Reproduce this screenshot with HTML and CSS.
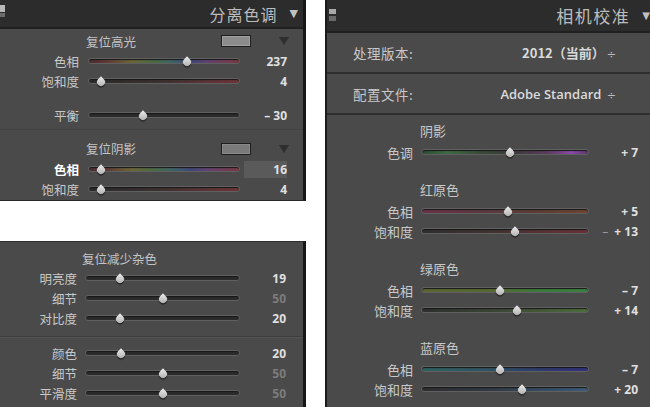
FILE: index.html
```html
<!DOCTYPE html>
<html lang="zh">
<head>
<meta charset="utf-8">
<link rel="stylesheet" href="styles.css">
</head>
<body>
<div class="page">
  <div class="left-col">
    <section class="panel split">
      <header class="phead">
        <span class="grip grip-left"></span>
        <h2>分离色调</h2>
        <span class="tri">▼</span>
      </header>
      <div class="pbody">
        <div class="reset-row"><span class="reset">复位高光</span><span class="swatch"></span><span class="mini-tri"></span></div>
        <div class="srow"><label>色相</label><div class="track hue"><i class="thumb" style="left:65%"></i></div><span class="val">237</span></div>
        <div class="srow"><label>饱和度</label><div class="track sat-red"><i class="thumb" style="left:8%"></i></div><span class="val">4</span></div>
        <div class="srow balance"><label>平衡</label><div class="track"><i class="thumb" style="left:36%"></i></div><span class="val">– 30</span></div>
        <div class="reset-row shadow"><span class="reset">复位阴影</span><span class="swatch dark"></span><span class="mini-tri"></span></div>
        <div class="srow active"><label>色相</label><div class="track hue"><i class="thumb" style="left:8%"></i></div><span class="val boxed">16</span></div>
        <div class="srow"><label>饱和度</label><div class="track sat-red"><i class="thumb" style="left:8%"></i></div><span class="val">4</span></div>
      </div>
    </section>
    <section class="panel noise">
      <div class="nbody">
        <div class="reset-row"><span class="reset">复位减少杂色</span></div>
        <div class="srow"><label>明亮度</label><div class="track"><i class="thumb" style="left:22%"></i></div><span class="val">19</span></div>
        <div class="srow"><label>细节</label><div class="track"><i class="thumb" style="left:50%"></i></div><span class="val dim">50</span></div>
        <div class="srow"><label>对比度</label><div class="track"><i class="thumb" style="left:22%"></i></div><span class="val">20</span></div>
        <div class="divider"></div>
        <div class="srow"><label>颜色</label><div class="track"><i class="thumb" style="left:23%"></i></div><span class="val">20</span></div>
        <div class="srow"><label>细节</label><div class="track"><i class="thumb" style="left:50%"></i></div><span class="val dim">50</span></div>
        <div class="srow"><label>平滑度</label><div class="track"><i class="thumb" style="left:50%"></i></div><span class="val dim">50</span></div>
      </div>
    </section>
  </div>

  <section class="panel calib">
    <header class="phead big">
      <span class="grip"></span>
      <h2>相机校准</h2>
      <span class="tri">▼</span>
    </header>
    <div class="prow"><span class="plabel">处理版本:</span><span class="pval">2012（当前）<span class="updown">÷</span></span></div>
    <div class="prow"><span class="plabel">配置文件:</span><span class="pval latin">Adobe Standard <span class="updown">÷</span></span></div>
    <div class="cbody">
      <div class="group">
        <div class="gtitle">阴影</div>
        <div class="srow"><label>色调</label><div class="track tint"><i class="thumb" style="left:53%"></i></div><span class="val">+ 7</span></div>
      </div>
      <div class="group">
        <div class="gtitle">红原色</div>
        <div class="srow"><label>色相</label><div class="track red-hue"><i class="thumb" style="left:52%"></i></div><span class="val">+ 5</span></div>
        <div class="srow"><label>饱和度</label><div class="track red-sat"><i class="thumb" style="left:56%"></i></div><span class="val"><span class="stray">–</span>+ 13</span></div>
      </div>
      <div class="group">
        <div class="gtitle">绿原色</div>
        <div class="srow"><label>色相</label><div class="track green-hue"><i class="thumb" style="left:47%"></i></div><span class="val">– 7</span></div>
        <div class="srow"><label>饱和度</label><div class="track green-sat"><i class="thumb" style="left:57%"></i></div><span class="val">+ 14</span></div>
      </div>
      <div class="group">
        <div class="gtitle">蓝原色</div>
        <div class="srow"><label>色相</label><div class="track blue-hue"><i class="thumb" style="left:47%"></i></div><span class="val">– 7</span></div>
        <div class="srow"><label>饱和度</label><div class="track blue-sat"><i class="thumb" style="left:60%"></i></div><span class="val">+ 20</span></div>
      </div>
    </div>
  </section>
</div>
</body>
</html>
```

FILE: styles.css
```css
* { box-sizing: border-box; }

html, body {
  margin: 0;
  padding: 0;
  background: #ffffff;
}

body {
  width: 650px;
  height: 407px;
  overflow: hidden;
  font-family: "Noto Sans CJK SC", "Noto Sans", sans-serif;
}

.page {
  display: flex;
  height: 407px;
}

.left-col {
  width: 306px;
  display: flex;
  flex-direction: column;
  justify-content: space-between;
}

.panel {
  background: #4a4a4a;
  color: #c8c8c8;
}

.split {
  height: 201px;
  border-right: 3px solid #161616;
  border-bottom: 1px solid #2a2a2a;
}

.noise {
  height: 166px;
  border-right: 3px solid #161616;
  border-top: 1px solid #2e2e2e;
}

.calib {
  margin-left: 19px;
  flex: 1;
  border-left: 2px solid #1c1c1c;
}

/* header */
.phead {
  height: 29px;
  background: #2c2c2c;
  border-bottom: 2px solid #202020;
  display: flex;
  align-items: center;
}

.phead.big {
  height: 33px;
}

.phead h2 {
  margin: 0 0 0 auto;
  font-size: 16px;
  font-weight: normal;
  letter-spacing: 1px;
  color: #bcbcbc;
}

.phead.big h2 {
  font-size: 17px;
  letter-spacing: 1.5px;
}

.tri {
  font-size: 11px;
  color: #c0c0c0;
  margin: 0 5px 0 12px;
  font-family: "DejaVu Sans", sans-serif;
}

.phead.big .tri {
  margin: 0 0 0 12px;
  font-size: 10px;
}

.grip {
  width: 7px;
  height: 13px;
  margin-left: 2px;
  background:
    linear-gradient(#a8a8a8, #a8a8a8) 0 0 / 7px 5px no-repeat,
    linear-gradient(#6a6a6a, #6a6a6a) 0 7px / 7px 5px no-repeat;
}

.grip-left {
  width: 5px;
  margin-left: 0;
  align-self: flex-start;
  margin-top: 5px;
  background:
    linear-gradient(#b8b8b8, #b8b8b8) 0 0 / 5px 7px no-repeat,
    linear-gradient(#6a6a6a, #6a6a6a) 0 8px / 5px 4px no-repeat;
}

/* body rows */
.pbody {
  padding-top: 2px;
}

.reset-row {
  height: 20px;
  display: flex;
  align-items: center;
  padding-left: 86px;
}

.reset {
  font-size: 12.5px;
  color: #c4c4c4;
  width: 135px;
}

.swatch {
  width: 30px;
  height: 12px;
  background: #8c8c8c;
  border: 1px solid #1e1e1e;
  box-shadow: inset 0 0 0 1px #a0a0a0;
}

.swatch.dark {
  background: #7a7a7a;
  box-shadow: inset 0 0 0 1px #8a8a8a;
}

.mini-tri {
  width: 0;
  height: 0;
  margin-left: 28px;
  border-left: 5px solid transparent;
  border-right: 5px solid transparent;
  border-top: 8px solid #2e2e2e;
}

.srow {
  height: 20px;
  display: flex;
  align-items: center;
}

.srow label {
  width: 79px;
  text-align: right;
  font-size: 12.5px;
  color: #c8c8c8;
}

.track {
  position: relative;
  margin-left: 9px;
  width: 152px;
  height: 6px;
  border-radius: 3px;
  background: #2b2b2b;
  border: 1px solid #606060;
  box-shadow: inset 0 1px 1px #181818;
}

.thumb {
  position: absolute;
  top: 50%;
  width: 8px;
  height: 8px;
  margin-left: -4px;
  margin-top: -3.5px;
  background: linear-gradient(135deg, #eeeeee, #a9a9a9);
  border-radius: 0 50% 50% 50%;
  transform: rotate(45deg);
  box-shadow: 1px 1px 1px rgba(0,0,0,0.5);
}

.val {
  width: 47px;
  text-align: right;
  font-family: "Open Sans", "Noto Sans", sans-serif;
  font-weight: 700;
  font-size: 12px;
  color: #e0e0e0;
}

.val.dim {
  color: #7c7c7c;
}

.val.boxed {
  margin-left: 4px;
  width: 43px;
  height: 17px;
  line-height: 17px;
  background: #5a5a5a;
}

.srow.active label {
  color: #ffffff;
  font-weight: 700;
}

.srow.balance {
  margin-top: 14px;
}

.reset-row.shadow {
  margin-top: 4px;
  padding-top: 8px;
  height: 30px;
  border-top: 1px solid #434343;
}

.hue {
  background: linear-gradient(90deg, #4a2c2c, #5e3434 10%, #6b6438 28%, #4a6a40 42%, #3d6466 55%, #3e4678 68%, #63406e 80%, #7a3840 100%);
}

.sat-red {
  background: linear-gradient(90deg, #2a2a2a, #3a3030 45%, #6e3438 100%);
}

/* noise panel */
.nbody {
  padding-top: 6px;
}

.nbody .reset-row {
  padding-left: 82px;
}

.nbody .srow label {
  width: 77px;
}

.nbody .track {
  margin-left: 8px;
  width: 155px;
}

.nbody .val {
  width: 46px;
}

.divider {
  height: 1px;
  margin: 8px 0 6px;
  background: #3e3e3e;
  box-shadow: 0 1px 0 #525252;
}

/* calibration panel */
.prow {
  height: 41px;
  display: flex;
  align-items: center;
  justify-content: space-between;
  padding: 0 34px 0 26px;
  border-bottom: 2px solid #2e2e2e;
  font-size: 13.5px;
}

.plabel {
  color: #c8c8c8;
  letter-spacing: 0.5px;
}

.pval {
  color: #dadada;
  font-weight: 700;
  font-size: 13px;
}

.pval.latin {
  font-family: "Open Sans", "Noto Sans", sans-serif;
  font-weight: 600;
  font-size: 13px;
}

.updown {
  font-family: "DejaVu Sans", sans-serif;
  font-weight: normal;
  font-size: 11px;
  color: #bdbdbd;
  margin-left: 2px;
}

.cbody {
  padding-top: 6px;
}

.group + .group {
  margin-top: 18px;
}

.gtitle {
  height: 20px;
  line-height: 20px;
  padding-left: 93px;
  font-size: 13px;
  color: #c8c8c8;
  margin-bottom: 1px;
}

.calib .srow label {
  width: 86px;
  font-size: 13px;
}

.calib .track {
  margin-left: 8px;
  width: 168px;
}

.calib .val {
  width: 49px;
  font-size: 12px;
}

.stray {
  font-weight: normal;
  color: #9a9a9a;
  margin-right: 6px;
}

.tint {
  background: linear-gradient(90deg, #2e4a34, #3c6a44 15%, #3a4a3a 35%, #3a3a3a 55%, #5a3a5a 75%, #8a48a8 90%, #5a3a6a 100%);
}

.red-hue {
  background: linear-gradient(90deg, #6a3048, #5a3a3e 40%, #5a3e34 70%, #6e4430 100%);
}

.red-sat {
  background: linear-gradient(90deg, #2e2e2e, #3e3232 40%, #6a3038 100%);
}

.green-hue {
  background: linear-gradient(90deg, #5a6430, #566a34 45%, #3a7a3c 70%, #3a8040 100%);
}

.green-sat {
  background: linear-gradient(90deg, #2e2e2e, #3c4634 45%, #4c6e3a 100%);
}

.blue-hue {
  background: linear-gradient(90deg, #2e6260, #2e5262 40%, #2e3a6a 70%, #30307a 100%);
}

.blue-sat {
  background: linear-gradient(90deg, #2e2e2e, #323a46 45%, #3a5a7a 100%);
}
```
